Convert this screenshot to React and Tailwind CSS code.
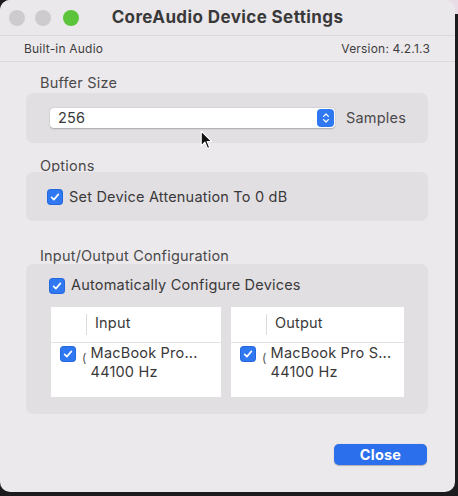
import React from "react";

const Check = ({ className = "" }) => (
  <span className={`flex items-center justify-center shrink-0 w-[16px] h-[16px] rounded-[4px] bg-[#2f78f2] shadow-[inset_0_0_0_1px_rgba(0,60,160,0.25)] ${className}`}>
    <svg viewBox="0 0 16 16" className="w-[12px] h-[12px]" fill="none" stroke="white" strokeWidth={2.2} strokeLinecap="round" strokeLinejoin="round">
      <polyline points="3.5 8.5 6.5 11.5 12.5 4.5" />
    </svg>
  </span>
);

const Stepper = () => (
  <span className="flex items-center justify-center w-[17px] h-[18px] rounded-[4px] bg-[#2f78f2]">
    <svg viewBox="0 0 10 14" className="w-[8px] h-[12px]" fill="none" stroke="white" strokeWidth={1.6} strokeLinecap="round" strokeLinejoin="round">
      <polyline points="2 5 5 2 8 5" />
      <polyline points="2 9 5 12 8 9" />
    </svg>
  </span>
);

const Cursor = () => (
  <svg viewBox="0 0 12 19" className="absolute left-[200px] top-[130px] w-[13px] h-[20px]">
    <path d="M1 1 L1 15 L4.5 11.5 L7 17.5 L9 16.6 L6.6 11 L11 11 Z" fill="#111" stroke="white" strokeWidth={1} strokeLinejoin="round" />
  </svg>
);

const DeviceTable = ({ title, name, width }) => (
  <div className={`${width} h-[90px] bg-white flex flex-col`}>
    <div className="h-[36px] flex items-center border-b border-[#e4e2e4]">
      <div className="w-[36px] h-[21px] border-r border-[#dcdadc]" />
      <span className="pl-[8px] -mt-[2px] text-[14.5px] tracking-[0.2px] text-[#3a393a]">{title}</span>
    </div>
    <div className="flex pt-[3px] pl-[9px]">
      <Check />
      <span className="ml-[6px] mt-[4px] text-[12px] text-[#555] leading-[16px]">(</span>
      <div className="ml-[4px] -mt-[3px] text-[14.5px] tracking-[0.2px] leading-[19px] text-[#3a393a] whitespace-nowrap">
        <div>{name}</div>
        <div>44100 Hz</div>
      </div>
    </div>
  </div>
);

export default function App() {
  return (
    <div className="w-[458px] h-[496px] bg-[#1c1b1d] overflow-hidden relative" style={{ fontFamily: 'Inter, "Liberation Sans", Arial, sans-serif' }}>
      <div className="absolute right-0 top-0 w-[20px] h-[14px] bg-[#e8dde6]" />
      <div className="relative w-[455px] h-[492px] rounded-[10px] bg-[#ece9ec] flex flex-col overflow-hidden">
        <div className="h-[36px] grid grid-cols-[1fr_auto_1fr] items-center border-b border-[#dcd9dc] bg-[#ebe8eb]">
          <div className="flex items-center gap-[10px] pl-[9px]">
            <span className="w-[16px] h-[16px] rounded-full bg-[#cdcbcd]" />
            <span className="w-[16px] h-[16px] rounded-full bg-[#cdcbcd]" />
            <span className="w-[16px] h-[16px] rounded-full bg-[#5cc43a] ml-[2px]" />
          </div>
          <h1 className="text-[17px] font-bold tracking-[0.4px] text-[#3a393a]">CoreAudio Device Settings</h1>
          <div />
        </div>
        <div className="h-[26px] flex items-center justify-between pl-[24px] pr-[25px] border-b border-[#dcd9dc] text-[12px] text-[#3e3d3e] tracking-[0.2px]">
          <span>Built-in Audio</span>
          <span>Version: 4.2.1.3</span>
        </div>

        <div className="flex flex-col px-[26px] pr-[27px] text-[#3a393a] text-[14.5px] tracking-[0.2px]">
          <div className="pt-[13px] pl-[14px] h-[31px] leading-[16px] text-[#4a494a]">Buffer Size</div>
          <div className="h-[50px] rounded-[7px] bg-[#e2dfe2] flex items-center pl-[24px] pb-[1px]">
            <div className="w-[285px] h-[20px] rounded-[4px] bg-white shadow-[0_0.5px_1.5px_rgba(0,0,0,0.25)] flex items-center justify-between pl-[8px] pr-[1px]">
              <span>256</span>
              <Stepper />
            </div>
            <span className="ml-[11px] text-[#4a494a]">Samples</span>
          </div>

          <div className="pt-[15px] pl-[14px] h-[29px] leading-[16px] text-[#4a494a]">Options</div>
          <div className="h-[49px] rounded-[7px] bg-[#e2dfe2] flex items-center pl-[21px]">
            <Check />
            <span className="ml-[6px]">Set Device Attenuation To 0 dB</span>
          </div>

          <div className="pt-[27px] pl-[14px] h-[43px] leading-[16px] text-[#4a494a]">Input/Output Configuration</div>
          <div className="h-[150px] rounded-[7px] bg-[#e2dfe2] flex flex-col pl-[23px] pt-[12px]">
            <div className="flex items-center">
              <Check />
              <span className="ml-[6px] -mt-[2px]">Automatically Configure Devices</span>
            </div>
            <div className="flex gap-[10px] mt-[11px] ml-[2px]">
              <DeviceTable title="Input" name="MacBook Pro..." width="w-[170px]" />
              <DeviceTable title="Output" name="MacBook Pro S..." width="w-[173px]" />
            </div>
          </div>

          <div className="flex justify-end pt-[30px] pr-[1px]">
            <button className="w-[93px] h-[21px] rounded-[5px] bg-[#2c6fec] text-white text-[14.5px] font-bold leading-[21px] shadow-[0_0.5px_1px_rgba(0,0,0,0.25)]">Close</button>
          </div>
        </div>
        <Cursor />
      </div>
    </div>
  );
}
